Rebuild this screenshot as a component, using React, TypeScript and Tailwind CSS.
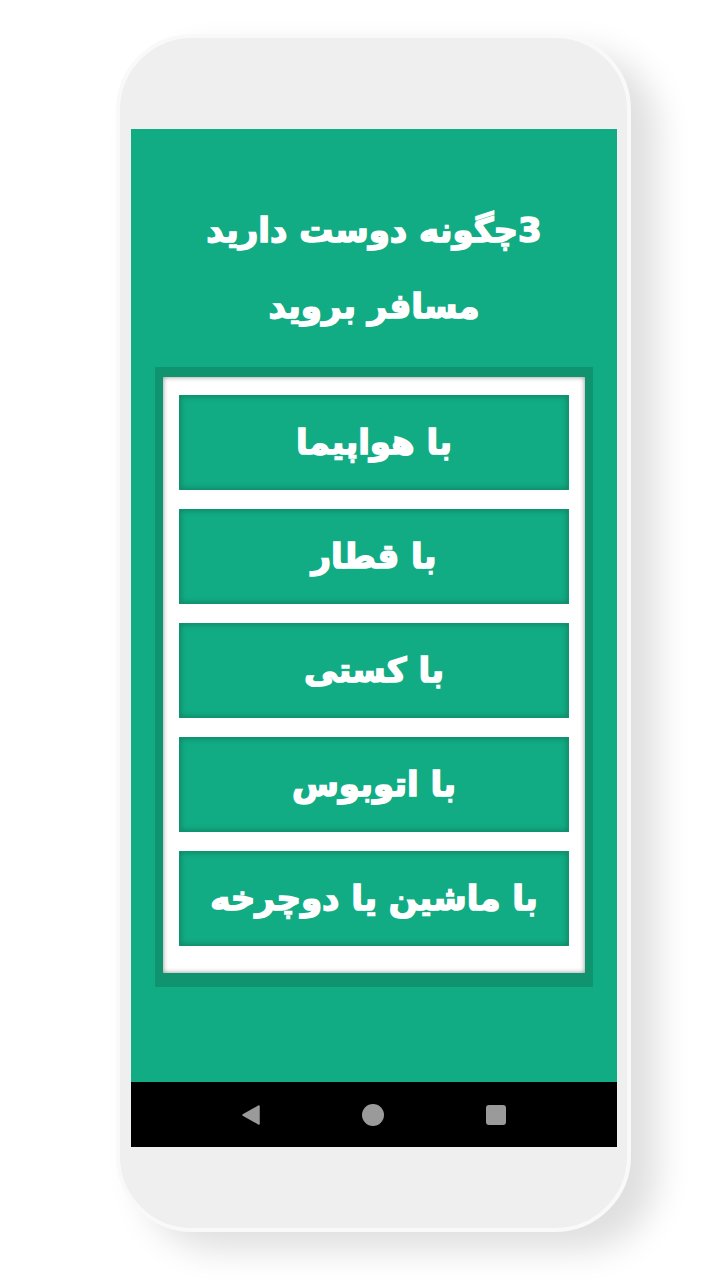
import React from 'react';

const OPTIONS = ['با هواپیما', 'با قطار', 'با کستی', 'با اتوبوس', 'با ماشین یا دوچرخه'];

const FONT = { fontFamily: '"DejaVu Sans", "Noto Sans", sans-serif' };

function NavBar() {
  return (
    <div className="flex h-[65px] items-center justify-center gap-[102px] bg-black">
      <svg width="18" height="20" viewBox="0 0 18 20" aria-hidden>
        <path d="M17 1 L17 19 L1 10 Z" fill="#9a9a9a" stroke="#9a9a9a" strokeWidth="1.5" strokeLinejoin="round" />
      </svg>
      <span className="block h-[22px] w-[22px] rounded-full bg-[#9a9a9a]" />
      <span className="block h-[20px] w-[20px] rounded-[3px] bg-[#9a9a9a]" />
    </div>
  );
}

export default function App() {
  return (
    <div className="min-h-[1280px] bg-white pt-[34px] pl-[116px]">
      <div className="flex h-[1198px] w-[515px] flex-col rounded-[76px] border-[4px] border-[#f9f9fa] bg-[#efeff0] pt-[91px] shadow-[26px_18px_34px_rgba(0,0,0,0.13)]">
        <div className="ml-[11px] w-[486px]">
          <div className="flex h-[953px] flex-col items-center bg-[#12ac84]" dir="rtl" style={FONT}>
            <h1 className="mt-[63px] text-center text-[34px] font-bold leading-[76px] text-white [-webkit-text-stroke:1.5px_white]">
              <div>3چگونه دوست دارید</div>
              <div>مسافر بروید</div>
            </h1>
            <div className="mt-[23px] w-[438px] border-x-[8px] border-t-[10px] border-b-[14px] border-[#10936f]">
              <div className="flex flex-col gap-[19px] bg-white px-[16px] pt-[18px] pb-[27px] shadow-[inset_0_0_5px_rgba(0,0,0,0.45)]">
                {OPTIONS.map((label) => (
                  <button
                    key={label}
                    type="button"
                    className="flex h-[95px] w-full items-center justify-center border border-[#10936f] bg-[#12ac84] text-[34px] font-bold text-white shadow-[inset_0_0_6px_rgba(0,0,0,0.28)] [-webkit-text-stroke:1.5px_white]"
                    style={FONT}
                  >
                    <span className="whitespace-pre tracking-[-0.5px]">{label}</span>
                  </button>
                ))}
              </div>
            </div>
          </div>
          <NavBar />
        </div>
      </div>
    </div>
  );
}
